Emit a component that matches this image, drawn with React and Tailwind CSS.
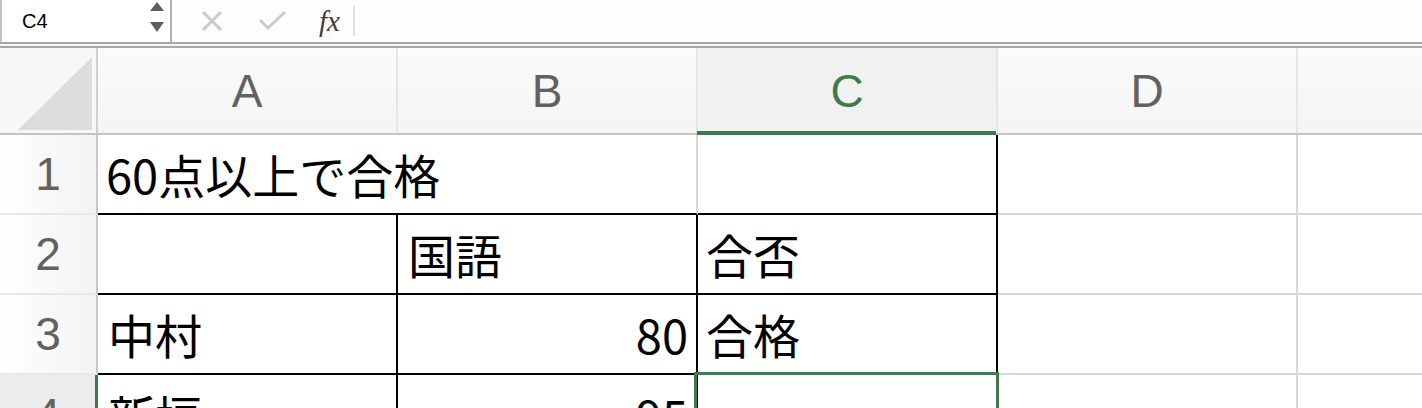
import React from 'react';

const cellFont = { fontFamily: '"Noto Sans CJK JP", "Noto Sans", sans-serif' };

function FormulaBar() {
    return (
        <div className="flex h-[42px] bg-[#fdfdfd] border-l-2 border-[#c4c4c4]">
            {/* Name box */}
            <div className="relative w-[170px] h-full bg-white border-r-2 border-[#b4b4b4] flex items-center">
                <span className="pl-[20px] text-[20px] text-black font-['Liberation_Sans',sans-serif]">C4</span>
                <svg className="absolute left-[147px] top-[1px]" width="16" height="32" viewBox="0 0 16 32">
                    <polygon points="1,10 8,1 15,10" fill="#5e5e5e" />
                    <polygon points="1,21 15,21 8,31" fill="#5e5e5e" />
                </svg>
            </div>
            {/* Cancel / enter / fx */}
            <div className="flex items-center h-full">
                <svg className="ml-[29px]" width="22" height="22" viewBox="0 0 22 22">
                    <path d="M2 2 L20 20 M20 2 L2 20" stroke="#cacaca" strokeWidth="3" fill="none" />
                </svg>
                <svg className="ml-[36px]" width="28" height="22" viewBox="0 0 28 22">
                    <path d="M1 10 L9 18 L26 2" stroke="#cacaca" strokeWidth="3" fill="none" />
                </svg>
                <span className="ml-[32px] text-[29px] italic text-[#3e3e3e] font-['Liberation_Serif',serif] leading-none">
                    fx
                </span>
                <div className="ml-[13px] w-[2px] h-[30px] bg-[#e2e2e2]" />
            </div>
        </div>
    );
}

function Grid() {
    return (
        <div className="relative">
            {/* Column headers */}
            <div className="flex h-[87px] border-b-2 border-[#c4c4c4] bg-gradient-to-b from-[#fbfbfb] to-[#f4f4f4] text-[46px] text-[#616161] font-['Liberation_Sans',sans-serif]">
                <div className="relative w-[98px] shrink-0 border-r-2 border-[#d0d0d0] bg-[#f7f7f7]">
                    <svg className="absolute left-[18px] top-[9px]" width="76" height="74" viewBox="0 0 76 74">
                        <polygon points="0,73 74,73 74,0" fill="#dcdcdc" />
                    </svg>
                </div>
                <div className="w-[300px] shrink-0 border-r-2 border-[#e6e6e6] flex items-center justify-center pt-[2px]">A</div>
                <div className="w-[300px] shrink-0 border-r-2 border-[#e6e6e6] flex items-center justify-center pt-[2px]">B</div>
                <div className="relative w-[300px] shrink-0 border-r-2 border-[#e6e6e6] bg-[#f1f1f1] text-[#3f7a4b] flex items-center justify-center pt-[2px]">
                    C
                    <div className="absolute -left-[1px] right-0 -bottom-[2px] h-[4px] bg-[#3f7a4b]" />
                </div>
                <div className="w-[300px] shrink-0 border-r-2 border-[#e6e6e6] flex items-center justify-center pt-[2px]">D</div>
                <div className="flex-1" />
            </div>

            {/* Row 1 */}
            <div className="flex h-[80px]">
                <RowHead n="1" />
                <div className="w-[300px] shrink-0 border-b-2 border-black flex items-center pl-[8px] text-[47px] text-black whitespace-nowrap relative z-10" style={cellFont}>
                    60点以上で合格
                </div>
                <div className="w-[300px] shrink-0 border-b-2 border-r-2 border-b-black border-r-[#d8d8d8]" />
                <div className="w-[300px] shrink-0 border-b-2 border-r-2 border-black" />
                <div className="w-[300px] shrink-0 border-b-2 border-r-2 border-[#d8d8d8]" />
                <div className="flex-1 border-b-2 border-[#d8d8d8]" />
            </div>

            {/* Row 2 */}
            <div className="flex h-[80px] text-[47px] text-black" style={cellFont}>
                <RowHead n="2" />
                <div className="w-[300px] shrink-0 border-b-2 border-r-2 border-black" />
                <div className="w-[300px] shrink-0 border-b-2 border-r-2 border-black flex items-center pl-[10px]">国語</div>
                <div className="w-[300px] shrink-0 border-b-2 border-r-2 border-black flex items-center pl-[8px]">合否</div>
                <div className="w-[300px] shrink-0 border-b-2 border-r-2 border-[#d8d8d8]" />
                <div className="flex-1 border-b-2 border-[#d8d8d8]" />
            </div>

            {/* Row 3 */}
            <div className="flex h-[80px] text-[47px] text-black" style={cellFont}>
                <RowHead n="3" />
                <div className="w-[300px] shrink-0 border-b-2 border-r-2 border-black flex items-center pl-[10px]">中村</div>
                <div className="w-[300px] shrink-0 border-b-2 border-r-2 border-black flex items-center justify-end pr-[8px]">80</div>
                <div className="w-[300px] shrink-0 border-b-2 border-r-2 border-black flex items-center pl-[8px]">合格</div>
                <div className="w-[300px] shrink-0 border-b-2 border-r-2 border-[#d8d8d8]" />
                <div className="flex-1 border-b-2 border-[#d8d8d8]" />
            </div>

            {/* Row 4 (selected) */}
            <div className="flex h-[80px] text-[47px] text-black" style={cellFont}>
                <div className="w-[98px] shrink-0 border-r-[3px] border-[#3f7a4b] bg-[#ececec] flex items-center justify-center text-[46px] text-[#616161] font-['Liberation_Sans',sans-serif]">
                    4
                </div>
                <div className="w-[300px] shrink-0 border-r-2 border-black flex items-center pl-[10px]">新垣</div>
                <div className="w-[300px] shrink-0 border-r-2 border-black flex items-center justify-end pr-[8px]">95</div>
                <div className="relative w-[300px] shrink-0">
                    <div className="absolute -left-[4px] -top-[3px] w-[305px] h-[90px] border-[3px] border-[#3f7a4b]" />
                </div>
                <div className="w-[300px] shrink-0 border-r-2 border-[#d8d8d8]" />
                <div className="flex-1" />
            </div>
        </div>
    );
}

function RowHead({ n }) {
    return (
        <div className="w-[98px] shrink-0 border-r-2 border-b-2 border-r-[#c8c8c8] border-b-[#e8e8e8] bg-gradient-to-r from-white to-[#f3f3f3] flex items-center justify-center text-[46px] text-[#616161] font-['Liberation_Sans',sans-serif]">
            {n}
        </div>
    );
}

export default function App() {
    return (
        <div className="w-[1422px] h-[408px] overflow-hidden bg-white">
            <FormulaBar />
            {/* double rule under the formula bar */}
            <div className="h-[6px] border-t-2 border-b-2 border-[#a6a6a6] bg-[#f4f4f4]" />
            <Grid />
        </div>
    );
}
